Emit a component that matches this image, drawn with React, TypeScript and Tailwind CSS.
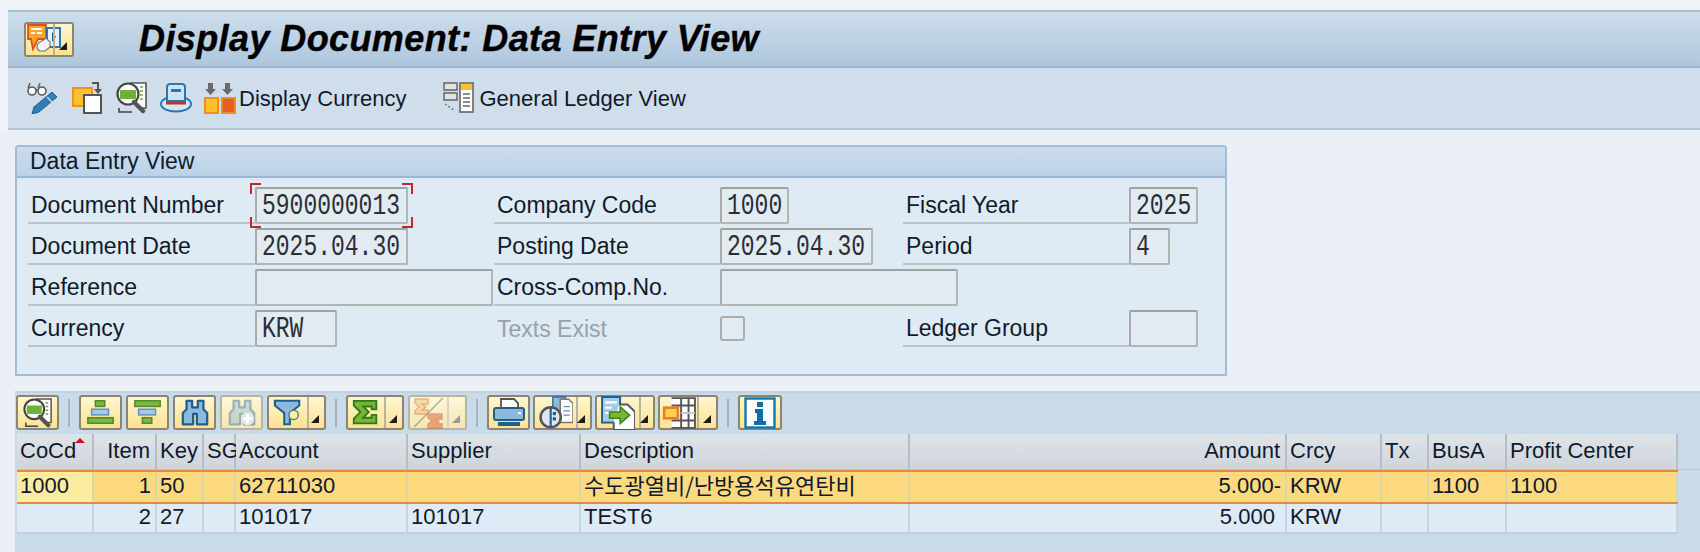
import type { ReactNode } from "react";

const sans = "font-['Liberation_Sans',Arial,sans-serif]";
const ink = "text-[#101a2b]";

// small black corner triangle used on the menu buttons
const MenuMark = ({ dim = false }: { dim?: boolean }) => (
  <svg width="10" height="10" viewBox="0 0 10 10" className="absolute right-[4px] bottom-[4px]">
    <path d="M9 1V9H1Z" fill={dim ? "#9b9b9b" : "#1c1c1c"} />
  </svg>
);

const Svg = ({ children, size = 32 }: { children: ReactNode; size?: number }) => (
  <svg width={size} height={size} viewBox="0 0 32 32" className="shrink-0">
    {children}
  </svg>
);

const GlassesPen = () => (
  <Svg>
    <circle cx="6" cy="9" r="4" fill="#fff" stroke="#5b5b5b" strokeWidth="1.6" />
    <circle cx="16" cy="9" r="4" fill="#fff" stroke="#5b5b5b" strokeWidth="1.6" />
    <path d="M2 6 4 1M12 6l2-5M10 8h2" stroke="#5b5b5b" strokeWidth="1.4" fill="none" />
    <path d="M26 10 31 15 13 30 6 32 8 25Z" fill="#2f7fb5" stroke="#1c5f8f" strokeWidth="1" />
    <path d="M21 15l5 5" stroke="#bcdcf0" strokeWidth="1.5" />
  </Svg>
);

const CopyDoc = () => (
  <Svg>
    <rect x="1" y="6" width="19" height="18" fill="#fcc22c" stroke="#f0921e" strokeWidth="2" />
    <rect x="12" y="13" width="17" height="18" fill="#fff" stroke="#555" strokeWidth="2" />
    <path d="M20 1h6v8" fill="none" stroke="#555" strokeWidth="2" />
    <path d="M22 7h8l-4 5Z" fill="#555" />
  </Svg>
);

const MagnifierDoc = ({ size = 32 }: { size?: number }) => (
  <Svg size={size}>
    <path d="M14 1H30V26H22" fill="#fff" stroke="#555" strokeWidth="1.6" />
    <path d="M24 5h3M24 9h3M24 13h3M24 17h3" stroke="#6ea93a" strokeWidth="1.6" />
    <circle cx="12" cy="12" r="10.500" fill="#fff" stroke="#444" strokeWidth="2.2" />
    <rect x="4" y="8" width="16" height="9" fill="#6fb13c" />
    <path d="M18 20l9 9" stroke="#555" strokeWidth="4.500" strokeLinecap="round" />
    <path d="M3 26V30H16" fill="none" stroke="#444" strokeWidth="1.6" />
  </Svg>
);

const Hat = () => (
  <Svg>
    <ellipse cx="16" cy="22" rx="15" ry="7.500" fill="#d6e7f4" stroke="#2b78ad" strokeWidth="2" />
    <path d="M7 19V5q0-3 3-3h12q3 0 3 3v14Z" fill="#cfe4f3" stroke="#2b78ad" strokeWidth="2" />
    <path d="M11 7h10v3H11Z" fill="#2b78ad" />
    <path d="M6 19.500h20v3H6Z" fill="#c9302a" />
  </Svg>
);

const CurrencySquares = () => (
  <Svg>
    <path d="M4 1h5v6h3l-5.500 6L1 7h3Z" fill="#6a6a6a" />
    <path d="M21 1h5v6h3l-5.500 6L18 7h3Z" fill="#6a6a6a" />
    <rect x="1" y="16" width="13" height="15" fill="#fcc22c" stroke="#ef8c22" strokeWidth="2" />
    <rect x="18" y="16" width="13" height="15" fill="#e35f22" stroke="#ef8c22" strokeWidth="2" />
  </Svg>
);

const LedgerIcon = () => (
  <Svg>
    <rect x="1" y="1" width="13" height="7" fill="#e3e3e3" stroke="#666" strokeWidth="1.5" />
    <rect x="1" y="11" width="13" height="7" fill="#e3e3e3" stroke="#666" strokeWidth="1.5" />
    <path d="M2 22l3 2 3 2 3 2" stroke="#777" strokeWidth="1.5" strokeDasharray="2 2" fill="none" />
    <rect x="17" y="1" width="13" height="29" fill="#fff" stroke="#666" strokeWidth="1.6" />
    <rect x="18" y="2" width="11" height="6" fill="#fcc22c" />
    <path d="M20 12h7M20 16h7M20 20h7M20 24h7" stroke="#666" strokeWidth="1.400" />
  </Svg>
);

const TitleIcon = () => (
  <svg width="34" height="32" viewBox="0 0 34 32" className="shrink-0">
    <path d="M1 2H19V16H11L6 26 4 16H1Z" fill="#f9a52c" stroke="#de4f20" strokeWidth="1.800" />
    <path d="M4 6h11M4 10h4M10 10h5" stroke="#fff" strokeWidth="1.800" />
    <rect x="20" y="5" width="13" height="19" fill="#e9f3fb" stroke="#2b78ad" strokeWidth="2" />
    <path d="M25 9l4 5-4 5Z" fill="#1d5f8f" />
    <path d="M10 24q0-4 5-6l4-3 4 4v5l-5 4h-5q-3-1-3-4Z" fill="#f4f4f4" stroke="#777" strokeWidth="1.200" />
  </svg>
);

const Pyramid = ({ flip = false }: { flip?: boolean }) => (
  <Svg size={30}>
    <g transform={flip ? "translate(0 30) scale(1 -1)" : undefined}>
      <rect x="10" y="3" width="10" height="6" fill="#7ab648" stroke="#4f8c22" strokeWidth="1.6" />
      <rect x="6" y="12" width="18" height="6" fill="#a8c8e6" stroke="#5d93bd" strokeWidth="1.6" />
      <rect x="2" y="21" width="27" height="6" fill="#7ab648" stroke="#4f8c22" strokeWidth="1.6" />
    </g>
  </Svg>
);

const Binoculars = ({ plus = false }: { plus?: boolean }) => (
  <Svg size={30}>
    <g opacity={plus ? 0.42 : 1}>
      <path
        d="M7 3h6v7h6V3h6v9l4 4v12H18V17h-4v11H3V16l4-4Z"
        fill="#8db9dc"
        stroke="#1d5f8f"
        strokeWidth="2.400"
        strokeLinejoin="round"
      />
    </g>
    {plus && (
      <g>
        <circle cx="22" cy="22" r="7" fill="#dfe8ef" />
        <path d="M22 17v10M17 22h10" stroke="#fff" strokeWidth="3" />
      </g>
    )}
  </Svg>
);

const Funnel = () => (
  <Svg size={30}>
    <path d="M2 3H28V8L18 16V28H12V16L2 8Z" fill="#8db9dc" stroke="#1d5f8f" strokeWidth="2.200" />
    <circle cx="22" cy="18" r="5" fill="#fdeea8" stroke="#5d7f90" strokeWidth="1.600" />
  </Svg>
);

const Sigma = () => (
  <Svg size={30}>
    <path d="M3 3H27V12H22V9H13L19 15 13 21H22V18H27V27H3V22L10 15 3 8Z" fill="#79b52f" stroke="#2f7a1e" strokeWidth="2" />
  </Svg>
);

const SubtotalIcon = () => (
  <Svg size={32}>
    <g opacity="0.5">
      <path d="M2 2H15V7H9L13 10 9 13H15V17H2V14L6 10 2 6Z" fill="#f5c07a" stroke="#d9703a" strokeWidth="1.400" />
      <path d="M15 17H29V22H23L26 25 23 27H29V31H15V27L19 24 15 21Z" fill="#e0603a" stroke="#c8502c" strokeWidth="1.400" />
      <path d="M1 30 30 1" stroke="#666" strokeWidth="1.400" />
    </g>
  </Svg>
);

const Printer = () => (
  <Svg size={32}>
    <path d="M8 11V2H21L25 6V11" fill="#fff" stroke="#555" strokeWidth="1.800" />
    <rect x="1" y="11" width="30" height="12" rx="2" fill="#8db9dc" stroke="#1d5f8f" strokeWidth="2" />
    <rect x="5" y="25" width="22" height="4" fill="#1d5f8f" />
    <rect x="25" y="15" width="3" height="2" fill="#fff" />
  </Svg>
);

const LayoutIcon = () => (
  <Svg size={34}>
    <rect x="13" y="1" width="12" height="22" fill="#8db9dc" stroke="#2b78ad" strokeWidth="1.400" />
    <path d="M20 3h8l4 4v18H20Z" fill="#fff" stroke="#777" strokeWidth="1.400" />
    <path d="M23 10h6M23 14h6M23 18h6" stroke="#5d93bd" strokeWidth="1.400" />
    <circle cx="11" cy="20" r="9.500" fill="#dfe6ec" stroke="#555" strokeWidth="2.400" />
    <path d="M11 11v18" stroke="#1d5f8f" strokeWidth="2" />
    <rect x="13" y="15" width="3" height="3" fill="#1d5f8f" />
    <rect x="13" y="20" width="3" height="3" fill="#1d5f8f" />
  </Svg>
);

const ExportIcon = () => (
  <Svg size={34}>
    <rect x="1" y="1" width="17" height="24" fill="#a8cbe6" stroke="#1d5f8f" strokeWidth="1.800" />
    <path d="M4 6h11M4 11h6M4 16h6" stroke="#fff" strokeWidth="2" />
    <path d="M17 8h8l7 7v17H12V25" fill="#fff" stroke="#555" strokeWidth="1.800" />
    <path d="M8 15h10v-5l9 8-9 8v-5H8Z" fill="#79b52f" stroke="#3c8420" strokeWidth="1.400" />
  </Svg>
);

const GridIcon = () => (
  <Svg size={34}>
    <path d="M9 2H31V30H9" fill="#fff" stroke="#555" strokeWidth="1.800" />
    <path d="M18 2V30M25 2V30M9 9H31M9 23H31" stroke="#555" strokeWidth="1.800" />
    <path d="M18 16H31" stroke="#c9c9c9" strokeWidth="1.800" />
    <rect x="2" y="11" width="13" height="10" fill="#fcd24c" stroke="#ef7a22" strokeWidth="2.400" />
  </Svg>
);

const InfoIcon = () => (
  <Svg size={32}>
    <rect x="1.500" y="1.500" width="29" height="29" fill="#fff" stroke="#1577ad" strokeWidth="2.400" />
    <rect x="13" y="5" width="6" height="5" fill="#0f6ea6" />
    <path d="M11 12h8v12h3v4H10v-4h3v-8h-2Z" fill="#0f6ea6" />
  </Svg>
);

// yellow SAP button, optional split for the dropdown part
const ToolButton = ({
  children,
  w,
  menu,
  dim = false,
}: {
  children: ReactNode;
  w: string;
  menu?: string;
  dim?: boolean;
}) => (
  <div
    className={`${w} h-[35px] flex shrink-0 rounded-[3px] border-2 ${
      dim ? "border-[#b9b5a3] from-[#fdf6da] to-[#f6e7ae]" : "border-[#8b8672] from-[#fff6cf] to-[#fde290]"
    } bg-gradient-to-b`}
  >
    <div className="flex-1 min-w-0 flex items-center justify-center">{children}</div>
    {menu && (
      <div className={`${menu} shrink-0 relative border-l-2 ${dim ? "border-[#d8d4c0]" : "border-[#b9b39a]"}`}>
        <MenuMark dim={dim} />
      </div>
    )}
  </div>
);

const Sep = () => <div className="mx-[9px] w-[2px] h-[28px] self-center bg-[#a7b2ba] shrink-0" />;

const Mono = ({ text }: { text: string }) => (
  <span className="inline-block mt-[2px] origin-center scale-y-[1.28] font-['Liberation_Mono','Courier_New',monospace] text-[23px] leading-none text-[#2a2e35]">
    {text}
  </span>
);

const InputBox = ({ w, value, focus = false }: { w: string; value?: string; focus?: boolean }) => (
  <div
    className={`${w} relative shrink-0 h-full flex items-center pl-[5px] rounded-[2px] bg-[#e3ebf2] border-2 border-[#b2b5b6] border-t-[#a0a2a2] border-l-[#a8abab]`}
  >
    {value && <Mono text={value} />}
    {focus && (
      <>
        <span className="absolute -left-[7px] -top-[6px] w-[11px] h-[11px] border-l-2 border-t-2 border-[#c1272d]" />
        <span className="absolute -right-[7px] -top-[6px] w-[11px] h-[11px] border-r-2 border-t-2 border-[#c1272d]" />
        <span className="absolute -left-[7px] -bottom-[6px] w-[11px] h-[11px] border-l-2 border-b-2 border-[#c1272d]" />
        <span className="absolute -right-[7px] -bottom-[6px] w-[11px] h-[11px] border-r-2 border-b-2 border-[#c1272d]" />
      </>
    )}
  </div>
);

const Label = ({ text, w, muted = false }: { text: string; w: string; muted?: boolean }) => (
  <div
    className={`${w} shrink-0 h-full flex items-center pl-[3px] pt-[2px] text-[23px] leading-none ${
      muted ? "text-[#9aa1a8]" : `${ink} border-b-2 border-[#bcc5cc]`
    }`}
  >
    {text}
  </div>
);

const Row = ({ children }: { children: ReactNode }) => <div className="flex h-[37px]">{children}</div>;

const columns = [
  { title: "CoCd", w: "w-[77px]" },
  { title: "Item", w: "w-[63px]", right: true },
  { title: "Key", w: "w-[47px]" },
  { title: "SG", w: "w-[32px]" },
  { title: "Account", w: "w-[172px]" },
  { title: "Supplier", w: "w-[173px]" },
  { title: "Description", w: "w-[329px]" },
  { title: "Amount", w: "w-[377px]", right: true },
  { title: "Crcy", w: "w-[95px]" },
  { title: "Tx", w: "w-[47px]" },
  { title: "BusA", w: "w-[78px]" },
  { title: "Profit Center", w: "w-[171px]" },
];

const rows = [
  ["1000", "1", "50", "", "62711030", "", "수도광열비/난방용석유연탄비", "5.000-", "KRW", "", "1100", "1100"],
  ["", "2", "27", "", "101017", "101017", "TEST6", "5.000 ", "KRW", "", "", ""],
];

export default function App() {
  return (
    <div className={`h-[552px] overflow-hidden flex flex-col pl-2 pt-[10px] bg-[#f0f4f8] ${sans} ${ink}`}>
      {/* title bar */}
      <div className="h-[58px] shrink-0 flex items-center pl-[16px] border-t-2 border-b-2 border-t-[#a9bfd2] border-b-[#9fb6cb] bg-gradient-to-b from-[#cddeeb] to-[#aec6dd]">
        <ToolButton w="w-[50px]" menu="w-[19px]">
          <div className="w-full pl-px">
            <TitleIcon />
          </div>
        </ToolButton>
        <h1 className="ml-[65px] text-[36px] leading-none font-bold italic tracking-[0.4px] text-black [-webkit-text-stroke:0.4px_black]">
          Display Document: Data Entry View
        </h1>
      </div>

      {/* application toolbar */}
      <div className="h-[62px] shrink-0 flex items-center pl-[18px] bg-[#cfdeea] border-b-2 border-[#b5c7d6] text-[22px]">
        <GlassesPen />
        <div className="ml-[14px]"><CopyDoc /></div>
        <div className="ml-[12px]"><MagnifierDoc /></div>
        <div className="ml-[12px]"><Hat /></div>
        <div className="ml-[12px]"><CurrencySquares /></div>
        <span className="ml-[3px]">Display Currency</span>
        <div className="ml-[36px]"><LedgerIcon /></div>
        <span className="ml-[5px]">General Ledger View</span>
      </div>

      <div className="flex-1 flex flex-col bg-[#eaf0f5] pt-[15px] -ml-2 pl-[15px]">
        {/* group box */}
        <div className="w-[1212px] h-[231px] shrink-0 rounded-t-[4px] border-2 border-[#a3bdd7] bg-[#deeaf4]">
          <div className="h-[31px] flex items-center pl-[13px] text-[23px] bg-gradient-to-b from-[#cbdded] to-[#bad2e8] border-b-2 border-[#9db8d3]">
            Data Entry View
          </div>
          <div className="flex flex-col gap-1 pt-[9px] pl-[11px]">
            <Row>
              <Label text="Document Number" w="w-[227px]" />
              <InputBox w="w-[153px]" value="5900000013" focus />
              <div className="ml-[86px] flex h-full">
                <Label text="Company Code" w="w-[226px]" />
                <InputBox w="w-[69px]" value="1000" />
              </div>
              <div className="ml-[114px] flex h-full">
                <Label text="Fiscal Year" w="w-[226px]" />
                <InputBox w="w-[69px]" value="2025" />
              </div>
            </Row>
            <Row>
              <Label text="Document Date" w="w-[227px]" />
              <InputBox w="w-[153px]" value="2025.04.30" />
              <div className="ml-[86px] flex h-full">
                <Label text="Posting Date" w="w-[226px]" />
                <InputBox w="w-[153px]" value="2025.04.30" />
              </div>
              <div className="ml-[30px] flex h-full">
                <Label text="Period" w="w-[226px]" />
                <InputBox w="w-[41px]" value="4" />
              </div>
            </Row>
            <Row>
              <Label text="Reference" w="w-[227px]" />
              <InputBox w="w-[238px]" />
              <div className="ml-px flex h-full">
                <Label text="Cross-Comp.No." w="w-[226px]" />
                <InputBox w="w-[238px]" />
              </div>
            </Row>
            <Row>
              <Label text="Currency" w="w-[227px]" />
              <InputBox w="w-[82px]" value="KRW" />
              <div className="ml-[157px] flex h-full">
                <Label text="Texts Exist" w="w-[226px]" muted />
                <div className="self-center w-[25px] h-[25px] shrink-0 rounded-[3px] border-2 border-[#a9adb0] bg-[#e3ebf2]" />
              </div>
              <div className="ml-[158px] flex h-full">
                <Label text="Ledger Group" w="w-[226px]" />
                <InputBox w="w-[69px]" />
              </div>
            </Row>
          </div>
        </div>

        {/* ALV grid */}
        <div className="mt-[15px] flex-1 bg-[#c9dae9] border-t-2 border-[#c2d2e0]">
          <div className="flex items-center h-[39px] pl-px">
            <ToolButton w="w-[43px]"><MagnifierDoc size={30} /></ToolButton>
            <Sep />
            <div className="flex gap-1">
              <ToolButton w="w-[43px]"><Pyramid /></ToolButton>
              <ToolButton w="w-[43px]"><Pyramid flip /></ToolButton>
              <ToolButton w="w-[43px]"><Binoculars /></ToolButton>
              <ToolButton w="w-[43px]" dim><Binoculars plus /></ToolButton>
              <ToolButton w="w-[59px]" menu="w-[17px]"><Funnel /></ToolButton>
            </div>
            <Sep />
            <div className="flex gap-1">
              <ToolButton w="w-[58px]" menu="w-[18px]"><Sigma /></ToolButton>
              <ToolButton w="w-[59px]" menu="w-[18px]" dim><SubtotalIcon /></ToolButton>
            </div>
            <Sep />
            <div className="flex gap-[3px]">
              <ToolButton w="w-[43px]"><Printer /></ToolButton>
              <ToolButton w="w-[59px]" menu="w-[14px]"><LayoutIcon /></ToolButton>
              <ToolButton w="w-[60px]" menu="w-[14px]"><ExportIcon /></ToolButton>
              <ToolButton w="w-[60px]" menu="w-[19px]"><GridIcon /></ToolButton>
            </div>
            <Sep />
            <ToolButton w="w-[44px]"><InfoIcon /></ToolButton>
          </div>

          <div className="pl-[2px] text-[22px] leading-none">
            <div className="flex h-[36px] mt-[2px] border-b border-[#b9c7d4]">
              {columns.map((c) => (
                <div
                  key={c.title}
                  className={`${c.w} relative shrink-0 flex items-center pl-[3px] pr-[5px] pb-[2px] border-r-2 border-[#b3bec8] bg-gradient-to-b from-[#dfe4e8] to-[#ced5db] ${
                    c.right ? "justify-end" : ""
                  }`}
                >
                  {c.title}
                  {c.title === "CoCd" && (
                    <svg width="10" height="5" viewBox="0 0 10 5" className="absolute left-[58px] top-[4px]">
                      <path d="M5 0 10 5H0Z" fill="#c4161c" />
                    </svg>
                  )}
                </div>
              ))}
            </div>
            {rows.map((row, r) => (
              <div
                key={r}
                className={
                  r === 0
                    ? "flex w-[1661px] h-[34px] border-y-2 border-[#e38b38] bg-[#fdd97f]"
                    : "flex w-[1661px] h-[30px] border-b-2 border-[#c5d0da] bg-[#deeaf5]"
                }
              >
                {row.map((cell, c) => (
                  <div
                    key={c}
                    className={`${columns[c].w} shrink-0 flex items-center pl-[3px] pr-[4px] whitespace-pre border-r-2 ${
                      r === 0 ? "border-[#dcd5a8]" : "border-[#c9d4de]"
                    } ${columns[c].right ? "justify-end" : ""} ${r === 0 && c === 0 ? "bg-[#fdeca0]" : ""} ${
                      c === 6 && r === 0
                        ? "pb-[6px] font-['Noto_Sans_CJK_KR','Liberation_Sans',sans-serif] text-[22px]"
                        : "pb-[2px]"
                    }`}
                  >
                    {cell}
                  </div>
                ))}
              </div>
            ))}
          </div>
        </div>
      </div>
    </div>
  );
}
